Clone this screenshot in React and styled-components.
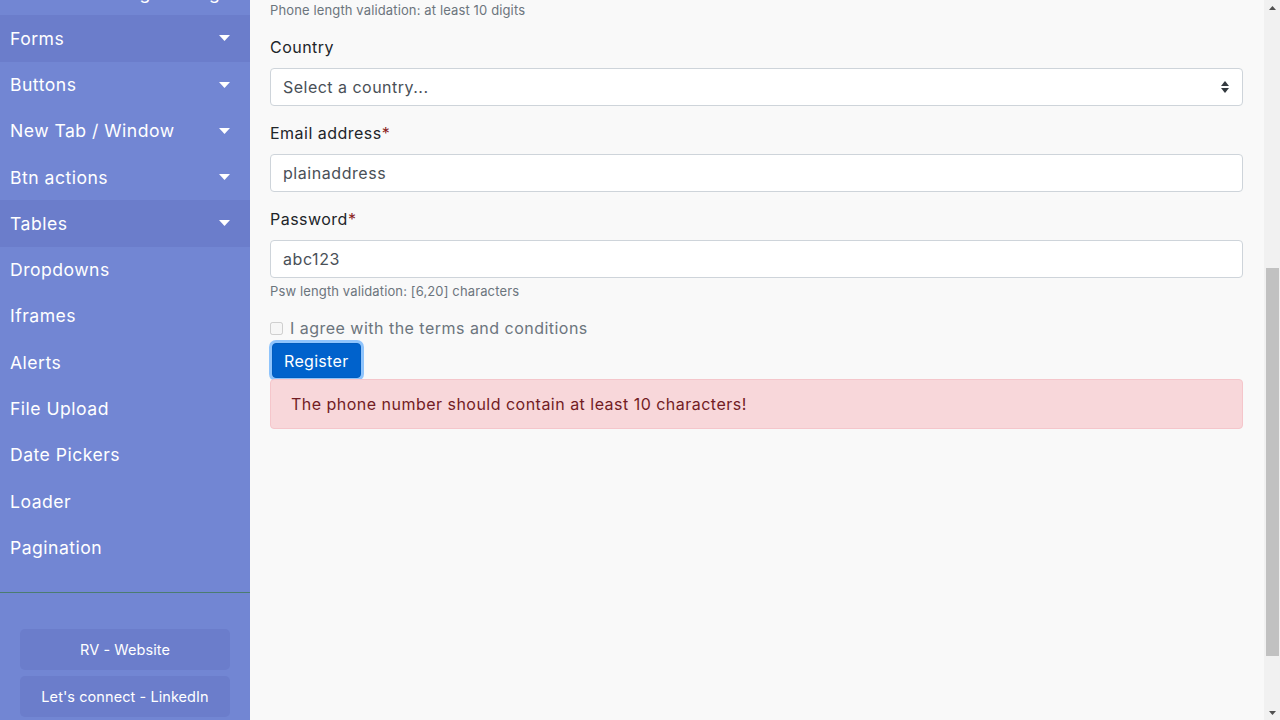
import React from 'react';
import styled, { createGlobalStyle } from 'styled-components';

const FONT = `Inter, "Noto Sans", "DejaVu Sans", sans-serif`;

const GlobalStyle = createGlobalStyle`
  html, body {
    margin: 0;
    padding: 0;
    height: 100%;
    overflow: hidden;
  }
  body {
    font-family: ${FONT};
    letter-spacing: 0.03em;
  }
  #root {
    height: 100%;
  }
  * {
    box-sizing: border-box;
  }
`;

const menu = [
  { label: 'Waits & Loading Testing' },
  { label: 'Forms', caret: true, active: true },
  { label: 'Buttons', caret: true },
  { label: 'New Tab / Window', caret: true },
  { label: 'Btn actions', caret: true },
  { label: 'Tables', caret: true, active: true },
  { label: 'Dropdowns' },
  { label: 'Iframes' },
  { label: 'Alerts' },
  { label: 'File Upload' },
  { label: 'Date Pickers' },
  { label: 'Loader' },
  { label: 'Pagination' },
];

const Caret = () => (
  <svg width="11" height="6" viewBox="0 0 11 6">
    <polygon points="0,0 11,0 5.5,6" fill="#fff" />
  </svg>
);

const SelectArrows = () => (
  <svg width="8" height="12" viewBox="0 0 8 12">
    <polygon points="0,5 4,0 8,5" fill="#343a40" />
    <polygon points="0,7 8,7 4,12" fill="#343a40" />
  </svg>
);

const ScrollArrow = ({ down }) => (
  <svg width="7" height="4" viewBox="0 0 7 4">
    <polygon points={down ? '0,0 7,0 3.5,4' : '0,4 7,4 3.5,0'} fill="#505050" />
  </svg>
);

export default function App() {
  return (
    <>
      <GlobalStyle />
      <Shell>
        <Sidebar>
          <MenuList>
            {menu.map((item) => (
              <MenuItem key={item.label} $active={item.active}>
                <span>{item.label}</span>
                {item.caret && <Caret />}
              </MenuItem>
            ))}
          </MenuList>
          <SidebarFooter>
            <FooterLink>RV - Website</FooterLink>
            <FooterLink>Let's connect - LinkedIn</FooterLink>
          </SidebarFooter>
        </Sidebar>

        <Main>
          <Content>
            <Help $first>Phone length validation: at least 10 digits</Help>

            <Group>
              <Label>Country</Label>
              <SelectWrap>
                <Select defaultValue="">
                  <option value="">Select a country...</option>
                </Select>
                <ArrowSlot>
                  <SelectArrows />
                </ArrowSlot>
              </SelectWrap>
            </Group>
            <Group>
              <Label>Email address<Req>*</Req></Label>
              <Input defaultValue="plainaddress" />
            </Group>
            <Group $last>
              <Label>Password<Req>*</Req></Label>
              <Input defaultValue="abc123" />
              <Help>Psw length validation: [6,20] characters</Help>
            </Group>

            <CheckRow>
              <Check type="checkbox" disabled />
              <CheckLabel>I agree with the terms and conditions</CheckLabel>
            </CheckRow>
            <Button type="button">Register</Button>
            <Alert>The phone number should contain at least 10 characters!</Alert>
          </Content>
        </Main>

        <Scrollbar>
          <ScrollButton>
            <ScrollArrow />
          </ScrollButton>
          <Track>
            <Thumb $top={253} $size={388} />
          </Track>
          <ScrollButton>
            <ScrollArrow down />
          </ScrollButton>
        </Scrollbar>
      </Shell>
    </>
  );
}

const Shell = styled.div`
  display: flex;
  height: 100vh;
  background: #f9f9f9;
`;

const Sidebar = styled.nav`
  width: 250px;
  flex-shrink: 0;
  display: flex;
  flex-direction: column;
  background: #7286d3;
  overflow: hidden;
`;

const MenuList = styled.ul`
  list-style: none;
  margin: -31px 0 21.5px;
  padding: 0;
`;

const MenuItem = styled.li`
  height: 46.27px;
  display: flex;
  align-items: center;
  justify-content: space-between;
  padding: 0 20px 0 10px;
  color: #fff;
  font-size: 17.6px;
  white-space: nowrap;
  background: ${(p) => (p.$active ? '#6b7dcb' : 'transparent')};
`;

const SidebarFooter = styled.div`
  border-top: 1px solid #4b7c70;
  padding: 36px 20px 0;
  display: flex;
  flex-direction: column;
  gap: 6px;
`;

const FooterLink = styled.a`
  height: 41px;
  display: flex;
  align-items: center;
  justify-content: center;
  border-radius: 5px;
  background: #6b7dcb;
  color: #fff;
  font-size: 14.5px;
  letter-spacing: 0.005em;
`;

const Main = styled.main`
  flex: 1;
  overflow: hidden;
  background: #f9f9f9;
`;

const Content = styled.div`
  padding: 1px 21px 0 20px;
`;

const Group = styled.div`
  margin-bottom: ${(p) => (p.$last ? '0' : '15px')};
`;

const Label = styled.label`
  display: block;
  margin-bottom: 9px;
  font-size: 16px;
  line-height: 24px;
  color: #212529;
`;

const Req = styled.span`
  color: #8b1e1e;
`;

const Input = styled.input`
  display: block;
  width: 100%;
  height: 38px;
  padding: 0 12px;
  font-family: ${FONT};
  font-size: 16px;
  letter-spacing: 0.035em;
  color: #495057;
  background: #fff;
  border: 1px solid #ced4da;
  border-radius: 4px;
  outline: none;
`;

const SelectWrap = styled.div`
  position: relative;
`;

const Select = styled.select`
  display: block;
  width: 100%;
  height: 38px;
  padding: 0 32px 0 12px;
  font-family: ${FONT};
  font-size: 16px;
  letter-spacing: 0.03em;
  color: #495057;
  background: #fff;
  border: 1px solid #ced4da;
  border-radius: 4px;
  appearance: none;
  outline: none;
`;

const ArrowSlot = styled.span`
  position: absolute;
  right: 14px;
  top: 13px;
  display: flex;
  pointer-events: none;
`;

const Help = styled.small`
  display: block;
  margin: ${(p) => (p.$first ? '0 0 15px' : '4px 0 0')};
  font-size: 13px;
  line-height: 19px;
  letter-spacing: 0.01em;
  color: #6c757d;
`;

const CheckRow = styled.div`
  display: flex;
  align-items: center;
  gap: 7px;
  margin-top: 15px;
  height: 24px;
`;

const Check = styled.input`
  margin: 0;
  width: 13px;
  height: 13px;
`;

const CheckLabel = styled.span`
  font-size: 16px;
  color: #6c757d;
`;

const Button = styled.button`
  display: block;
  margin: 3px 0 0 2px;
  height: 35px;
  padding: 0 11px;
  font-family: ${FONT};
  font-size: 16px;
  letter-spacing: 0.02em;
  color: #fff;
  background: #0062cc;
  border: 1px solid #005cbf;
  border-radius: 4px;
  box-shadow: 0 0 0 3px rgba(38, 143, 255, 0.5);
`;

const Alert = styled.div`
  margin-top: 1px;
  padding: 12px 20px;
  font-size: 16px;
  line-height: 24px;
  color: #721c24;
  background: #f8d7da;
  border: 1px solid #f5c6cb;
  border-radius: 4px;
`;

const Scrollbar = styled.div`
  width: 16px;
  flex-shrink: 0;
  display: flex;
  flex-direction: column;
  background: #f1f1f1;
`;

const ScrollButton = styled.div`
  height: 15px;
  display: flex;
  align-items: center;
  justify-content: center;
`;

const Track = styled.div`
  flex: 1;
  display: flex;
  flex-direction: column;
  align-items: center;
`;

const Thumb = styled.div`
  width: 13px;
  margin-top: ${(p) => p.$top}px;
  height: ${(p) => p.$size}px;
  background: #c1c1c1;
`;
